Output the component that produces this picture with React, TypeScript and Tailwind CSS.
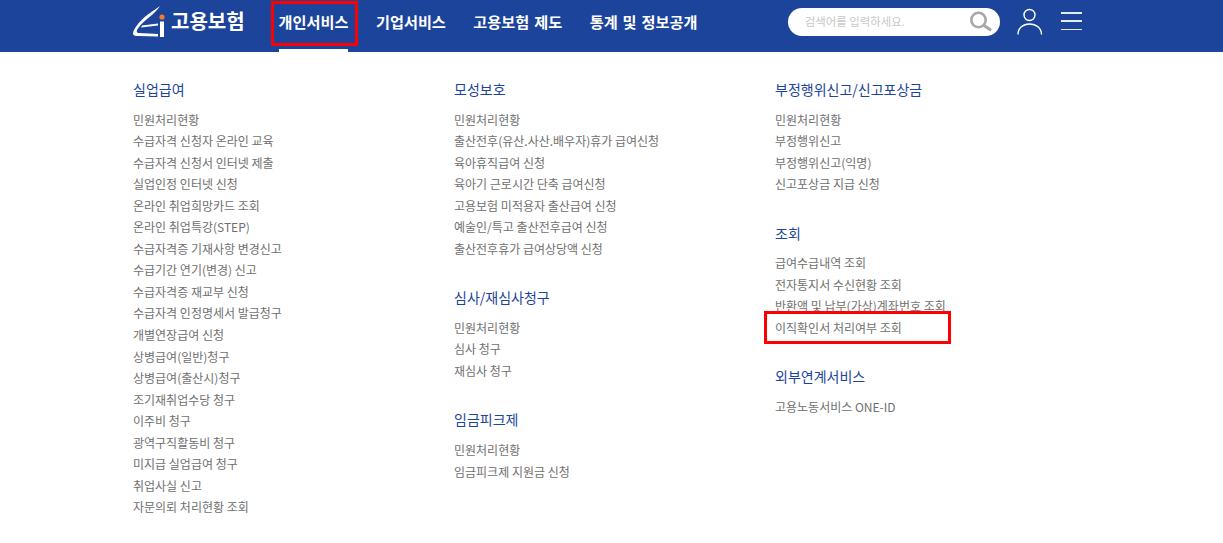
const columns = [
  [
    {
      title: "실업급여",
      items: [
        "민원처리현황",
        "수급자격 신청자 온라인 교육",
        "수급자격 신청서 인터넷 제출",
        "실업인정 인터넷 신청",
        "온라인 취업희망카드 조회",
        "온라인 취업특강(STEP)",
        "수급자격증 기재사항 변경신고",
        "수급기간 연기(변경) 신고",
        "수급자격증 재교부 신청",
        "수급자격 인정명세서 발급청구",
        "개별연장급여 신청",
        "상병급여(일반)청구",
        "상병급여(출산시)청구",
        "조기재취업수당 청구",
        "이주비 청구",
        "광역구직활동비 청구",
        "미지급 실업급여 청구",
        "취업사실 신고",
        "자문의뢰 처리현황 조회",
      ],
    },
  ],
  [
    {
      title: "모성보호",
      items: [
        "민원처리현황",
        "출산전후(유산.사산.배우자)휴가 급여신청",
        "육아휴직급여 신청",
        "육아기 근로시간 단축 급여신청",
        "고용보험 미적용자 출산급여 신청",
        "예술인/특고 출산전후급여 신청",
        "출산전후휴가 급여상당액 신청",
      ],
    },
    { title: "심사/재심사청구", items: ["민원처리현황", "심사 청구", "재심사 청구"] },
    { title: "임금피크제", items: ["민원처리현황", "임금피크제 지원금 신청"] },
  ],
  [
    {
      title: "부정행위신고/신고포상금",
      items: ["민원처리현황", "부정행위신고", "부정행위신고(익명)", "신고포상금 지급 신청"],
    },
    {
      title: "조회",
      items: [
        "급여수급내역 조회",
        "전자통지서 수신현황 조회",
        "반환액 및 납부(가상)계좌번호 조회",
        "이직확인서 처리여부 조회",
      ],
    },
    { title: "외부연계서비스", items: ["고용노동서비스 ONE-ID"] },
  ],
];

const Logo = () => (
  <div className="mt-[5px] flex items-center gap-[6px]">
    <svg width="32" height="32" viewBox="0 0 32 32" fill="none">
      <path d="M27 1 C20 6 10 12 5 19 C2 23 0 26 0 28.5 C0 30.5 2 31 5 31 L25 31.5 L25 29 L6 28 C3 28 3 25.5 6 22 C11 15.5 22 9 27 1 Z" fill="#fff" />
      <path d="M9 20.5 L25 18.5 L25 20.5 L8 22.5 Z" fill="#fff" />
      <circle cx="29" cy="12" r="2.6" fill="#ee7d31" />
      <rect x="27" y="16.5" width="4" height="15.5" fill="#fff" />
    </svg>
    <span className="text-[20px] font-bold text-white">고용보험</span>
  </div>
);

const App = () => {
  const nav = ["개인서비스", "기업서비스", "고용보험 제도", "통계 및 정보공개"];

  return (
    <div className="relative min-h-[543px] bg-white font-['Noto_Sans_CJK_KR',sans-serif]">
      <header className="flex h-[52px] items-start bg-[#1c449b] pl-[133px]">
        <Logo />
        <nav className="ml-[34px] flex h-full gap-[27.5px]">
          {nav.map((label, i) => (
            <a
              key={label}
              className={
                "flex h-full items-center pb-[6px] text-[15.2px] font-bold text-white [word-spacing:1.5px] border-b-[3px] " +
                (i === 0 ? "border-white" : "border-transparent")
              }
            >
              {label}
            </a>
          ))}
        </nav>
        <div className="ml-[90.5px] mt-[8px] flex h-[28px] w-[212px] items-center justify-between rounded-full bg-white pl-[17px] pr-[5px]">
          <span className="text-[11.4px] text-[#c8c8c8]">검색어를 입력하세요.</span>
          <svg width="26" height="24" viewBox="0 0 26 24" fill="none">
            <circle cx="9.5" cy="10" r="7.2" stroke="#a8a8a8" strokeWidth="2.6" />
            <path d="M15 15.5 L21 19.5" stroke="#a8a8a8" strokeWidth="3.2" strokeLinecap="round" />
          </svg>
        </div>
        <svg className="ml-[17px] mt-[8px]" width="26" height="28" viewBox="0 0 26 28" fill="none">
          <circle cx="12.5" cy="7" r="5.5" stroke="#fff" strokeWidth="1.4" />
          <path d="M1 26.5 C1 20 6 16 12.5 16 C19 16 24.5 20 24.5 26.5" stroke="#fff" strokeWidth="1.4" />
        </svg>
        <div className="ml-[18px] mt-[12px] flex h-[18px] w-[21px] flex-col justify-between">
          <span className="h-[1.5px] bg-[#e4e9f4]" />
          <span className="h-[1.5px] bg-[#e4e9f4]" />
          <span className="h-[1.5px] bg-[#e4e9f4]" />
        </div>
      </header>

      <main className="grid grid-cols-[321px_321px_321px] pl-[133px] pt-[27px]">
        {columns.map((sections, i) => (
          <div key={i} className="flex flex-col gap-[28px]">
            {sections.map((section) => (
              <section key={section.title}>
                <h2 className="mb-[9.5px] text-[14px] leading-[20px] font-normal text-[#1c449b]">
                  {section.title}
                </h2>
                <ul>
                  {section.items.map((item) => (
                    <li key={item} className="text-[12px] leading-[21.55px] text-[#707070]">
                      {item}
                    </li>
                  ))}
                </ul>
              </section>
            ))}
          </div>
        ))}
      </main>

      {/* red annotation boxes on top of the page */}
      <div className="absolute left-[271px] top-[1px] h-[45px] w-[87px] border-[3px] border-[#ff0000]" />
      <div className="absolute left-[764px] top-[311px] h-[33px] w-[187px] border-[3px] border-[#ff0000]" />
    </div>
  );
};

export default App;
